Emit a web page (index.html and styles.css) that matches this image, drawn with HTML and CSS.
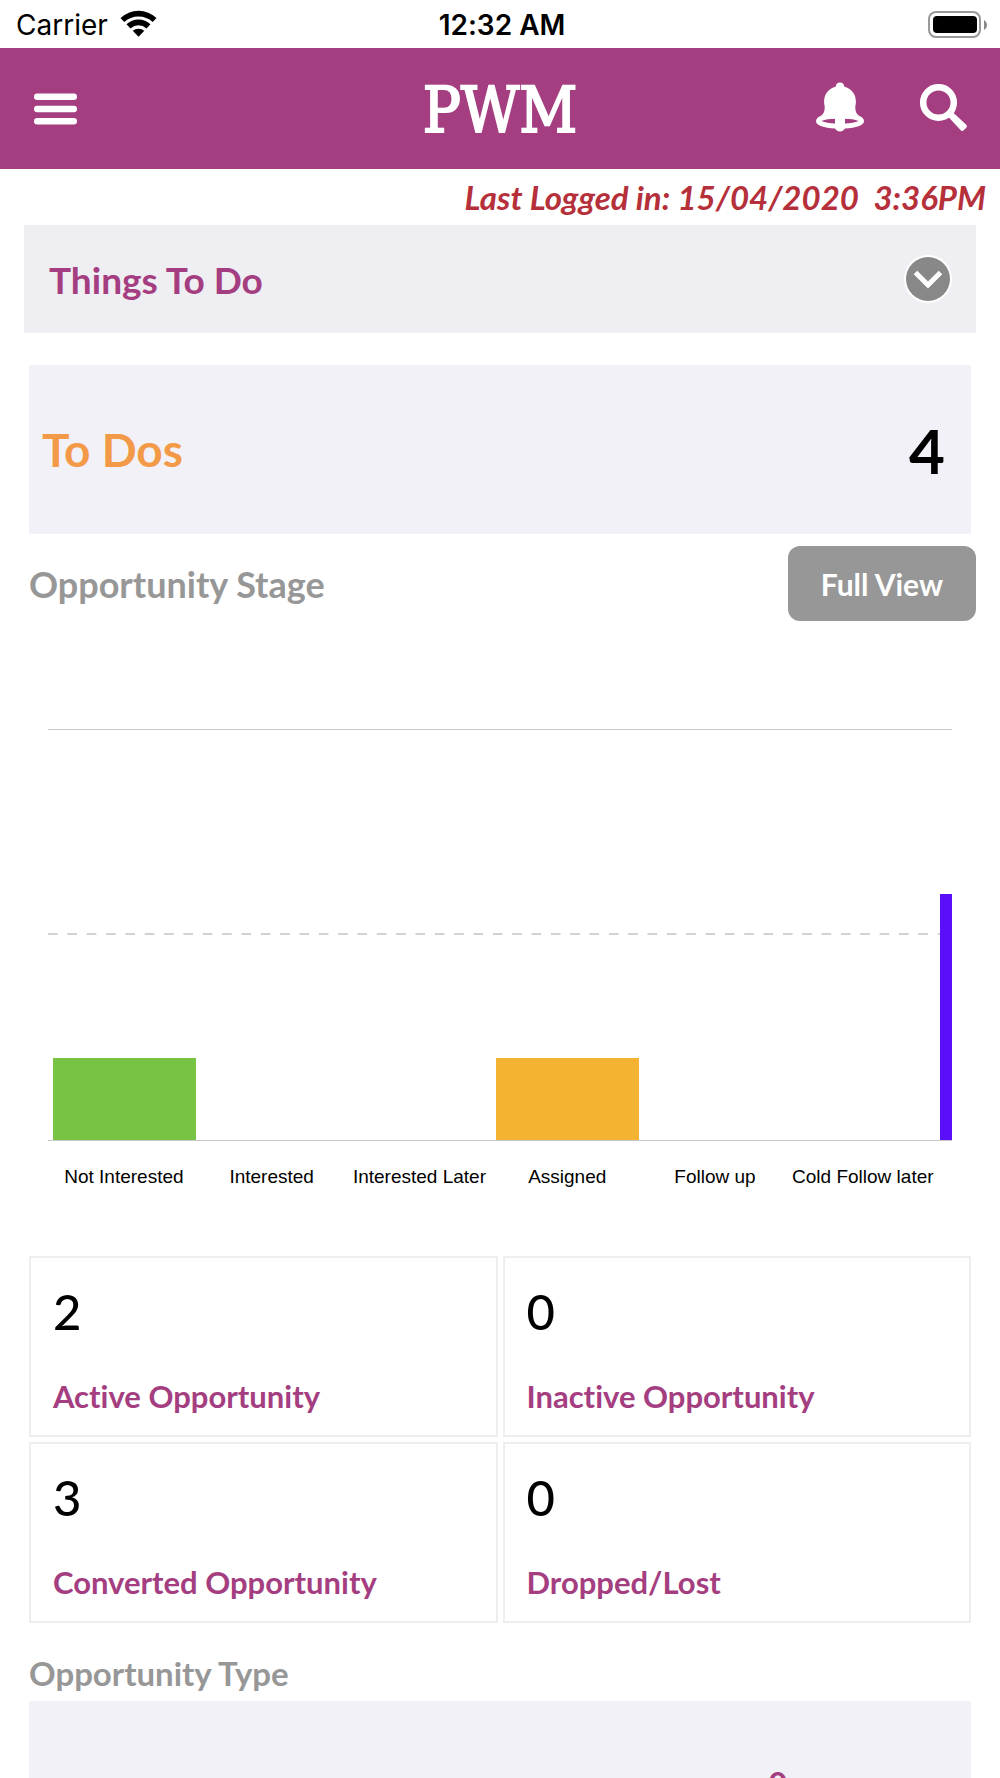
FILE: index.html
```html
<!DOCTYPE html>
<html lang="en">
<head>
  <meta charset="UTF-8">
  <meta name="viewport" content="width=device-width, initial-scale=1.0">
  <title>PWM</title>
  <link rel="stylesheet" href="styles.css">
</head>
<body>
<div class="status-bar">
  <div class="carrier">
    <span>Carrier</span>
    <svg class="wifi" width="37" height="27" viewBox="0 0 37 27">
      <path d="M0.500 8A26 26 0 0 1 36.500 8L32.700 12A21 21 0 0 0 4.300 12Z"/>
      <path d="M6.500 14.300A17.300 17.300 0 0 1 30.500 14.300L26.500 18.400A12 12 0 0 0 10.500 18.400Z"/>
      <path d="M12.700 20.800A9 9 0 0 1 24.300 20.800L18.500 26.800Z"/>
    </svg>
  </div>
  <span class="time">12:32 AM</span>
  <svg class="battery" width="60" height="28" viewBox="0 0 60 28">
    <rect x="1" y="1" width="51" height="25" rx="7" fill="#fff" stroke="#999" stroke-width="2"/>
    <rect x="5" y="5" width="44" height="17" rx="4"/>
    <path d="M56 9c4 2 4 8 0 10z" fill="#888"/>
  </svg>
</div>

<header class="header">
  <button class="icon-btn" type="button" aria-label="Menu">
    <svg width="43" height="32" viewBox="0 0 43 32">
      <rect y="0.500" width="43" height="6.500" rx="3.200"/>
      <rect y="12.700" width="43" height="6.500" rx="3.200"/>
      <rect y="25" width="43" height="6.500" rx="3.200"/>
    </svg>
  </button>
  <h1 class="header-title">PWM</h1>
  <div class="header-actions">
    <button class="icon-btn" type="button" aria-label="Notifications">
      <svg width="48" height="50" viewBox="0 0 48 50">
        <path fill-rule="evenodd" d="M24 0.500C26.500 0.500 28 2 28.200 4.500C35.500 6.500 39.800 12 39.900 19.500C40 22 39.300 23 39.300 25.500C39.300 29.500 40.500 32 43 33.800C46 35 48 36.800 48 39.300C48 43.300 40 46 29 46.500C27.800 48.500 26 49.500 24 49.500C22 49.500 20.200 48.500 19 46.500C8 46 0 43.300 0 39.300C0 36.800 2 35 5 33.800C7.500 32 8.700 29.500 8.700 25.500C8.700 23 8 22 8.100 19.500C8.200 12 12.500 6.500 19.800 4.500C20 2 21.500 0.500 24 0.500ZM5.500 39C9 40.500 13.500 41.300 19 41.500V36.800C14 36.800 9 37.500 5.500 39ZM42.500 39C39 37.500 34 36.800 29 36.800V41.500C34.500 41.300 39 40.500 42.500 39Z"/>
      </svg>
    </button>
    <button class="icon-btn" type="button" aria-label="Search">
      <svg width="48" height="48" viewBox="0 0 48 48">
        <circle cx="18.500" cy="18.500" r="15.300" fill="none" stroke="#fff" stroke-width="6.500"/>
        <path d="M27.500 32L32 27.500L46 40.500Q47.800 42 46.300 43.700L43.700 46.300Q42 47.800 40.500 46Z"/>
      </svg>
    </button>
  </div>
</header>

<p class="last-login">Last Logged in: 15/04/2020&nbsp; 3:36PM</p>

<main>
  <section class="panel-title">
    <h2>Things To Do</h2>
    <button class="icon-btn" type="button" aria-label="Expand">
      <svg width="48" height="48" viewBox="0 0 48 48">
        <circle cx="24" cy="24" r="24"/>
        <circle cx="24" cy="24" r="22" fill="#888"/>
        <path d="M11.500 17.500L24 30L36.500 17.500" fill="none" stroke="#fff" stroke-width="5"/>
      </svg>
    </button>
  </section>

  <section class="todos">
    <span class="todos-label">To Dos</span>
    <span class="todos-count">4</span>
  </section>

  <div class="stage-head">
    <h3 class="stage-title">Opportunity Stage</h3>
    <button class="full-view" type="button">Full View</button>
  </div>

  <!-- Opportunity stage chart, y axis runs 0 to 5 -->
  <section class="chart">
    <div class="plot">
      <svg class="mid-line" width="100%" height="2">
        <line x1="0" y1="1" x2="100%" y2="1" stroke="#d2d2d2" stroke-width="2" stroke-dasharray="9.670 9.670"/>
      </svg>
      <div class="bar green" style="height: 20%"></div>
      <div class="bar" style="height: 0%"></div>
      <div class="bar" style="height: 0%"></div>
      <div class="bar orange" style="height: 20%"></div>
      <div class="bar" style="height: 0%"></div>
      <div class="bar" style="height: 0%"></div>
      <div class="bar blue" style="height: 60%"></div>
    </div>
    <div class="labels">
      <span>Not Interested</span>
      <span>Interested</span>
      <span>Interested Later</span>
      <span>Assigned</span>
      <span>Follow up</span>
      <span>Cold Follow later</span>
    </div>
  </section>

  <section class="cards">
    <div class="card">
      <span class="card-number">2</span>
      <span class="card-label">Active Opportunity</span>
    </div>
    <div class="card">
      <span class="card-number">0</span>
      <span class="card-label">Inactive Opportunity</span>
    </div>
    <div class="card">
      <span class="card-number">3</span>
      <span class="card-label">Converted Opportunity</span>
    </div>
    <div class="card">
      <span class="card-number">0</span>
      <span class="card-label">Dropped/Lost</span>
    </div>
  </section>

  <h3 class="type-title">Opportunity Type</h3>
  <section class="type-panel">
    <span class="type-count">0</span>
  </section>
</main>
</body>
</html>
```
FILE: styles.css
```css
* {
  margin: 0;
  padding: 0;
  box-sizing: border-box;
}

body {
  height: 100vh;
  overflow: hidden;
  font-family: Lato, "Open Sans", sans-serif;
  font-weight: bold;
  font-variant-ligatures: none;
  background: #fff;
  color: #000;
}

svg {
  display: block;
}

/* status bar */
.status-bar {
  display: grid;
  grid-template-columns: 1fr auto 1fr;
  align-items: center;
  height: 48px;
  padding: 2px 12px 0 16px;
  font-family: Inter, sans-serif;
  font-size: 28px;
}

.carrier {
  display: flex;
  align-items: center;
  gap: 12px;
  font-weight: normal;
}

.wifi {
  margin-bottom: 3px;
}

.time {
  font-weight: 600;
}

.battery {
  justify-self: end;
}

/* header */
.header {
  display: grid;
  grid-template-columns: 1fr auto 1fr;
  align-items: center;
  height: 121px;
  padding: 0 32px;
  background: #a43e80;
  color: #fff;
}

.header-title {
  padding-top: 4px;
  font-family: "DejaVu Serif Condensed", "DejaVu Serif", serif;
  font-stretch: condensed;
  font-size: 63px;
  font-weight: normal;
  -webkit-text-stroke: 2px #fff;
}

.header-actions {
  display: flex;
  align-items: flex-end;
  justify-content: flex-end;
  gap: 56px;
  padding-bottom: 4px;
}

.icon-btn {
  justify-self: start;
  padding: 0 2px;
  border: none;
  background: none;
  fill: #fff;
  cursor: pointer;
}

.header-actions .icon-btn {
  padding: 0;
}

.last-login {
  padding-right: 14px;
  line-height: 56px;
  font-size: 33px;
  font-style: italic;
  text-align: right;
  color: #b5303a;
}

/* things to do */
main {
  padding: 0 24px;
}

.panel-title {
  display: flex;
  align-items: center;
  justify-content: space-between;
  height: 108px;
  padding: 0 22px 0 25px;
  background: #efeef3;
  color: #a43e80;
}

.panel-title h2 {
  font-size: 37px;
}

.todos {
  display: flex;
  align-items: center;
  justify-content: space-between;
  height: 169px;
  margin: 32px 5px 12px;
  padding: 0 26px 0 13px;
  background: #f2f1f7;
}

.todos-label {
  font-size: 46px;
  color: #f29a47;
}

.todos-count {
  font-size: 62px;
}

/* opportunity stage */
.stage-head {
  display: flex;
  align-items: center;
  justify-content: space-between;
  padding-left: 5px;
}

.stage-title {
  font-size: 36px;
  color: #979797;
}

.full-view {
  height: 75px;
  padding: 0 33px;
  border: none;
  border-radius: 12px;
  background: #979797;
  color: #fff;
  font: inherit;
  font-size: 30px;
  cursor: pointer;
}

.chart {
  margin: 108px 24px 0;
}

.plot,
.labels {
  display: grid;
  grid-template-columns: repeat(6, 29fr) 3fr;
  padding-left: 2px;
}

.plot {
  position: relative;
  align-items: end;
  height: 412px;
  border-top: 1px solid #c8c8c8;
  border-bottom: 1px solid #c8c8c8;
}

.mid-line {
  position: absolute;
  bottom: 50%;
  left: 0;
}

.bar {
  position: relative;
  margin: 0 2px 0 3px;
}

.bar:last-child {
  margin-right: 0;
}

.green {
  background: #77c344;
}

.orange {
  background: #f5b334;
}

.blue {
  background: #5a0ff8;
}

.labels {
  padding-top: 24px;
  font-family: "Liberation Sans", Arial, sans-serif;
  font-size: 19px;
  font-weight: normal;
  line-height: 24px;
  text-align: center;
  white-space: nowrap;
}

/* opportunity cards */
.cards {
  display: grid;
  grid-template-columns: 1fr 1fr;
  gap: 5px;
  margin: 67px 5px 0;
}

.card {
  display: flex;
  flex-direction: column;
  gap: 38px;
  height: 181px;
  padding: 24px 22px;
  border: 2px solid #eee;
}

.card-number {
  font-size: 49px;
  font-weight: 500;
  line-height: 58px;
}

.card-label {
  font-size: 31px;
  line-height: 36px;
  color: #a43e80;
}

/* opportunity type */
.type-title {
  margin: 32px 0 10px;
  padding-left: 5px;
  font-size: 33px;
  line-height: 36px;
  color: #979797;
}

.type-panel {
  display: grid;
  grid-template-columns: 59% 41%;
  margin: 0 5px;
  padding: 60px 0;
  background: #f2f1f7;
}

.type-count {
  grid-column: 2;
  font-size: 33px;
  line-height: 44px;
  text-align: center;
  color: #a43e80;
}
```
